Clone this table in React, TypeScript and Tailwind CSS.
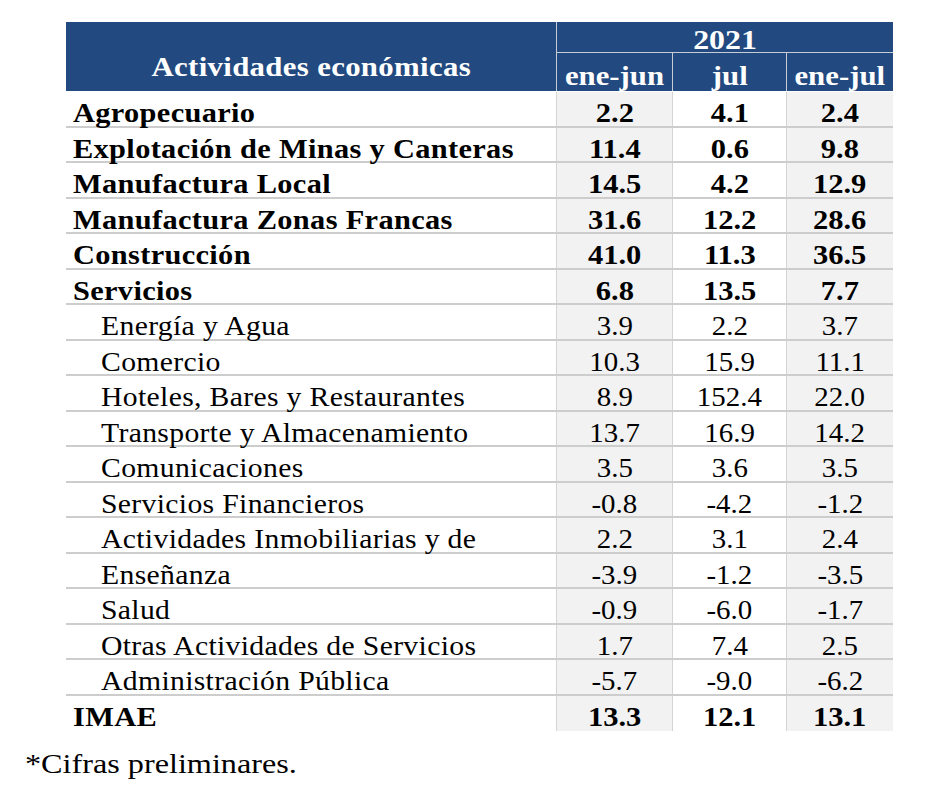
import React from "react";

type Row = { label: string; vals: [string, string, string]; bold: boolean };

const rows: Row[] = [
  { label: "Agropecuario", vals: ["2.2", "4.1", "2.4"], bold: true },
  { label: "Explotación de Minas y Canteras", vals: ["11.4", "0.6", "9.8"], bold: true },
  { label: "Manufactura Local", vals: ["14.5", "4.2", "12.9"], bold: true },
  { label: "Manufactura Zonas Francas", vals: ["31.6", "12.2", "28.6"], bold: true },
  { label: "Construcción", vals: ["41.0", "11.3", "36.5"], bold: true },
  { label: "Servicios", vals: ["6.8", "13.5", "7.7"], bold: true },
  { label: "Energía y Agua", vals: ["3.9", "2.2", "3.7"], bold: false },
  { label: "Comercio", vals: ["10.3", "15.9", "11.1"], bold: false },
  { label: "Hoteles, Bares y Restaurantes", vals: ["8.9", "152.4", "22.0"], bold: false },
  { label: "Transporte y Almacenamiento", vals: ["13.7", "16.9", "14.2"], bold: false },
  { label: "Comunicaciones", vals: ["3.5", "3.6", "3.5"], bold: false },
  { label: "Servicios Financieros", vals: ["-0.8", "-4.2", "-1.2"], bold: false },
  { label: "Actividades Inmobiliarias y de", vals: ["2.2", "3.1", "2.4"], bold: false },
  { label: "Enseñanza", vals: ["-3.9", "-1.2", "-3.5"], bold: false },
  { label: "Salud", vals: ["-0.9", "-6.0", "-1.7"], bold: false },
  { label: "Otras Actividades de Servicios", vals: ["1.7", "7.4", "2.5"], bold: false },
  { label: "Administración Pública", vals: ["-5.7", "-9.0", "-6.2"], bold: false },
  { label: "IMAE", vals: ["13.3", "12.1", "13.1"], bold: true },
];

const serif = "font-['Liberation_Serif','Times_New_Roman',serif]";

function NumCell({ v, w, bg, bold }: { v: string; w: string; bg: string; bold: boolean }) {
  return (
    <div
      className={`${w} ${bg} flex items-start justify-center pt-[8px] text-[27px] leading-none ${
        bold ? "font-bold" : "font-normal"
      }`}
    >
      <span className={`inline-block origin-center ${bold ? "scale-x-[1.13]" : "scale-x-[1.07]"}`}>{v}</span>
    </div>
  );
}

export default function App() {
  return (
    <div className={`w-[934px] h-[800px] bg-white text-black ${serif}`}>
      <div className="pt-[22px] pl-[66px]">
        <div className="w-[827px]">
          {/* Header */}
          <div className="flex h-[69px]">
            <div className="w-[490px] bg-[#224a80] flex items-start justify-center pt-[31px] text-white font-bold text-[28px] leading-none">
              <span className="inline-block scale-x-[1.1] origin-center tracking-[0.3px]">Actividades económicas</span>
            </div>
            <div className="w-[1px] bg-[#c8ccd4]" />
            <div className="w-[336px] flex flex-col">
              <div className="h-[30px] bg-[#224a80] flex items-start justify-center pt-[5px] text-white font-bold text-[27px] leading-none">
                <span className="inline-block scale-x-[1.18] origin-center">2021</span>
              </div>
              <div className="h-[1px] bg-[#c8ccd4]" />
              <div className="flex flex-1">
                <div className="w-[115px] bg-[#224a80] flex items-start justify-center pt-[10px] text-white font-bold text-[27px] leading-none">
                  <span className="inline-block scale-x-[1.14] origin-center">ene-jun</span>
                </div>
                <div className="w-[1px] bg-[#c8ccd4]" />
                <div className="w-[113px] bg-[#224a80] flex items-start justify-center pt-[10px] text-white font-bold text-[27px] leading-none">
                  <span className="inline-block scale-x-[1.14] origin-center">jul</span>
                </div>
                <div className="w-[1px] bg-[#c8ccd4]" />
                <div className="w-[106px] bg-[#224a80] flex items-start justify-center pt-[10px] text-white font-bold text-[27px] leading-none">
                  <span className="inline-block scale-x-[1.14] origin-center">ene-jul</span>
                </div>
              </div>
            </div>
          </div>
          {/* Body */}
          <div className="mt-[1px]">
            {rows.map((r, i) => {
              const last = i === rows.length - 1;
              return (
                <div
                  key={i}
                  className={`flex h-[35.5px] ${last ? "" : "border-b-2 border-[#cdcdcd]"}`}
                >
                  <div
                    className={`w-[490px] flex items-start pt-[8px] text-[27px] leading-none whitespace-nowrap ${
                      r.bold ? "pl-[7px] font-bold" : "pl-[35px] font-normal"
                    }`}
                  >
                    <span
                      className={`inline-block origin-left tracking-[0.3px] ${
                        r.bold ? "scale-x-[1.125]" : "scale-x-[1.1]"
                      }`}
                    >
                      {r.label}
                    </span>
                  </div>
                  <div className="w-[1px] bg-[#d4d4d4]" />
                  <NumCell v={r.vals[0]} w="w-[115px]" bg="bg-[#f2f2f2]" bold={r.bold} />
                  <div className="w-[1px] bg-[#d4d4d4]" />
                  <NumCell v={r.vals[1]} w="w-[113px]" bg="bg-white" bold={r.bold} />
                  <div className="w-[1px] bg-[#d4d4d4]" />
                  <NumCell v={r.vals[2]} w="w-[106px]" bg="bg-[#f2f2f2]" bold={r.bold} />
                </div>
              );
            })}
          </div>
        </div>
      </div>
      <div className="pl-[25px] pt-[19px] text-[28px] leading-none">
        <span className="inline-block scale-x-[1.15] origin-left">*Cifras preliminares.</span>
      </div>
    </div>
  );
}
